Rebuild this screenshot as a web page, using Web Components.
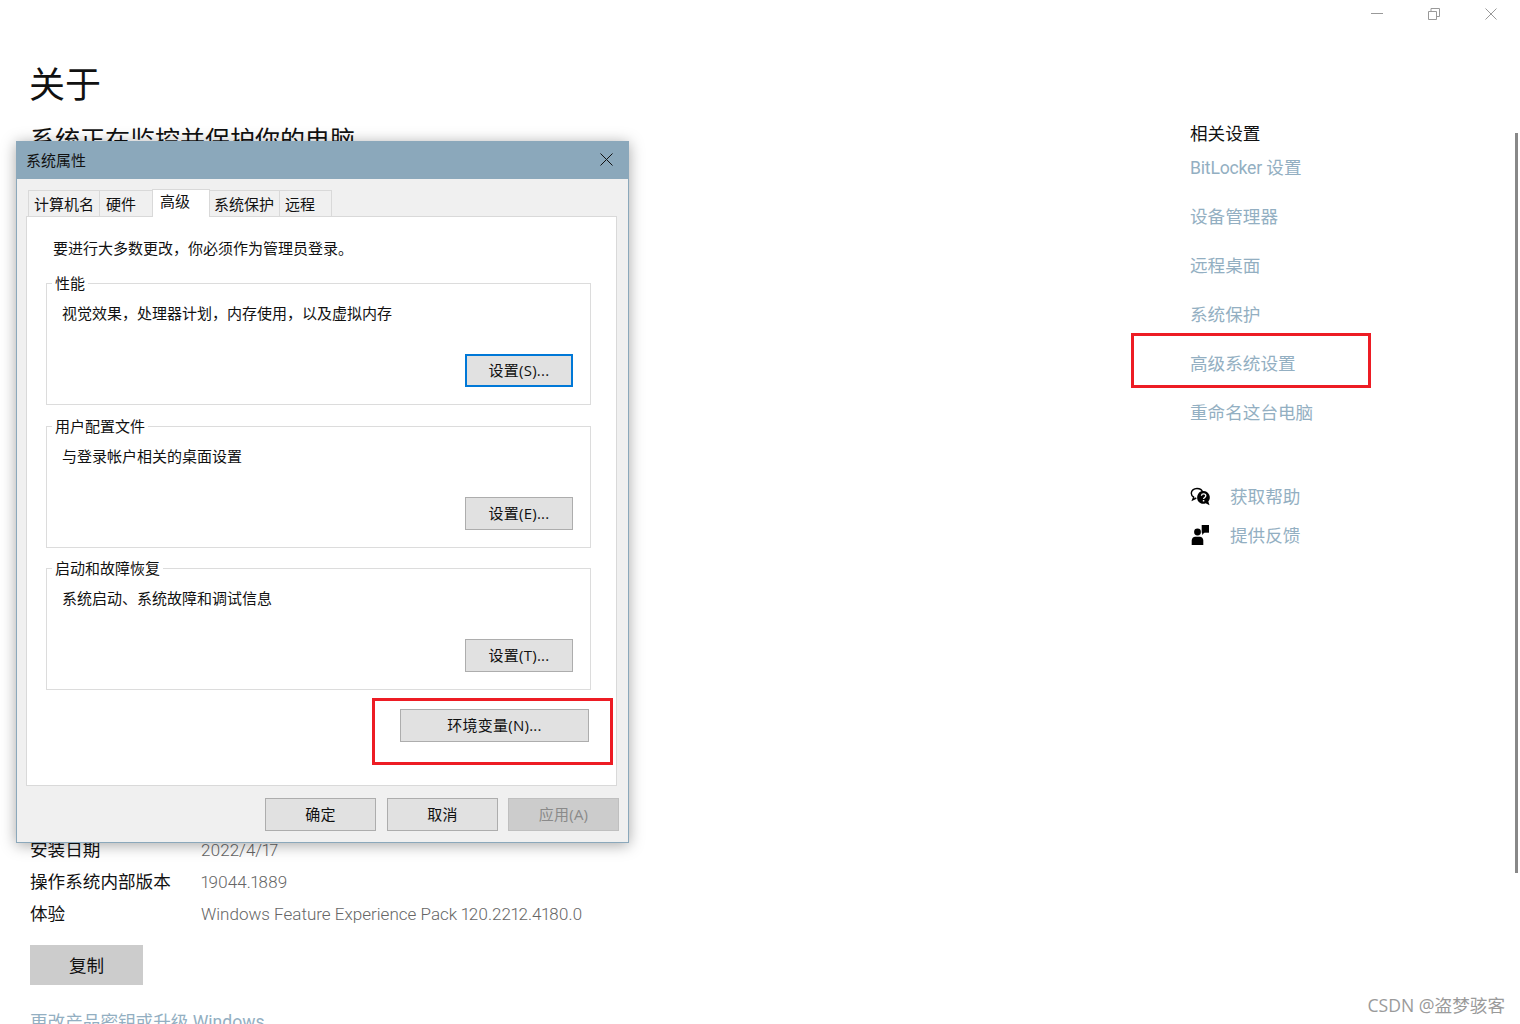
<!DOCTYPE html>
<html lang="zh-CN">
<head>
<meta charset="utf-8">
<title>关于</title>
<style>
  html, body { margin: 0; height: 100%; overflow: hidden; background: #fff; }
  body { font-family: "Open Sans", "Noto Sans CJK SC", sans-serif; position: relative; width: 1520px; height: 1024px; }
</style>
</head>
<body>
<about-page></about-page>
<sys-dialog></sys-dialog>
<red-box style="left:1131px;top:333px;width:240px;height:55px"></red-box>
<red-box style="left:372px;top:698px;width:241px;height:67px"></red-box>

<script>
const FONT = '"Open Sans", "Noto Sans CJK SC", sans-serif';
const THIN = 'Roboto, "Noto Sans CJK SC", sans-serif';

class WinControls extends HTMLElement {
  constructor() {
    super();
    this.attachShadow({ mode: 'open' }).innerHTML = `
      <style>
        :host { position: absolute; top: 0; right: 0; width: 1520px; height: 28px; display: flex; justify-content: flex-end; box-sizing: border-box; padding: 8px 23px 0 0; gap: 45px; }
        svg { width: 12px; height: 12px; display: block; fill: none; stroke: #999; stroke-width: 1; }
      </style>
      <svg viewBox="0 0 12 12"><path d="M0 5.5h12"/></svg>
      <svg viewBox="0 0 12 12"><path d="M.5 3.5h8v8h-8zM3 3.5V.5h8.5v8H8.500"/></svg>
      <svg viewBox="0 0 12 12"><path d="M.5.5l11 11M11.500.5l-11 11"/></svg>`;
  }
}
customElements.define('win-controls', WinControls);

class InfoRow extends HTMLElement {
  constructor() {
    super();
    this.attachShadow({ mode: 'open' }).innerHTML = `
      <style>
        :host { display: grid; grid-template-columns: 171px 1fr; height: 32px; line-height: 32px; font-size: 17.6px; color: #111; }
        .v { color: #666; font-family: ${THIN}; font-weight: 300; font-size: 17.05px; line-height: 34px; font-variant-numeric: proportional-nums; }
      </style>
      <div><slot name="k"></slot></div>
      <div class="v"><slot name="v"></slot></div>`;
  }
}
customElements.define('info-row', InfoRow);

class RelatedPanel extends HTMLElement {
  constructor() {
    super();
    this.attachShadow({ mode: 'open' }).innerHTML = `
      <style>
        :host { display: block; padding-top: 119px; font-size: 17.6px; line-height: 28px; }
        h2 { font: inherit; color: #111; margin: 0; }
        a { display: block; color: #93afc2; font-family: ${THIN}; height: 49px; text-decoration: none; }
        .links { margin-top: 7px; }
        .latin { letter-spacing: -.2px; }
        .help { margin-top: 29px; display: grid; grid-template-columns: 40px 1fr; grid-auto-rows: 39px; align-items: center; }
        .help a { height: auto; }
        svg { width: 22px; height: 22px; display: block; }
      </style>
      <h2>相关设置</h2>
      <div class="links">
        <a><span class="latin">BitLocker</span> 设置</a>
        <a>设备管理器</a>
        <a>远程桌面</a>
        <a>系统保护</a>
        <a>高级系统设置</a>
        <a>重命名这台电脑</a>
      </div>
      <div class="help">
        <svg viewBox="0 0 22 22">
          <path d="M7 2.500c-3.300 0-5.700 2-5.700 4.700 0 1.700 1 3.100 2.400 4l-1 2.600 3.600-1.800" fill="#fff" stroke="#000" stroke-width="1.400"/>
          <path d="M7 2.500c2.800 0 5 1.500 5.500 3.500" fill="none" stroke="#000" stroke-width="1.400"/>
          <path d="M13.500 5a6.500 6.500 0 0 0-2.800 12.300c1.700.8 3.500.7 5-.1l3.800 2-1.200-3.600A6.500 6.500 0 0 0 13.500 5z" fill="#000"/>
          <path d="M11.400 9.800c.1-1.200 1-1.900 2.200-1.900 1.300 0 2.200.8 2.200 1.900 0 1.700-2.200 1.600-2.200 3.200" fill="none" stroke="#fff" stroke-width="1.300"/>
          <rect x="12.800" y="14" width="1.500" height="1.500" fill="#fff"/>
        </svg>
        <a>获取帮助</a>
        <svg viewBox="0 0 22 22">
          <rect x="11.700" y="0" width="7.300" height="7.700" fill="#000"/>
          <path d="M12 7l.3 3 2.400-3z" fill="#000"/>
          <circle cx="7.500" cy="7" r="3.400" fill="#000"/>
          <path d="M1.700 20v-4.500c0-2.300 1.700-3.800 3.500-3.800h4.600c1.800 0 3.500 1.500 3.500 3.800V20z" fill="#000"/>
        </svg>
        <a>提供反馈</a>
      </div>`;
  }
}
customElements.define('related-panel', RelatedPanel);

class AboutPage extends HTMLElement {
  constructor() {
    super();
    this.attachShadow({ mode: 'open' }).innerHTML = `
      <style>
        :host { display: grid; grid-template-columns: 1190px 1fr; height: 1024px; overflow: hidden; position: relative; font-family: ${FONT}; }
        .main { padding: 60px 0 0 30px; }
        h1 { font-size: 36px; font-weight: 400; line-height: 50px; margin: 0 0 0 -1px; color: #111; }
        h3 { font-size: 25px; font-weight: 400; line-height: 36px; margin: 11px 0 0; color: #111; }
        .rows { margin-top: 676px; }
        button { display: block; margin-top: 16px; width: 113px; height: 40px; border: 0; background: #ccc; color: #111; font: inherit; font-size: 17.6px; padding: 0 0 2px; }
        a { display: block; margin-top: 23px; color: #93afc2; font-family: ${THIN}; font-size: 17.6px; line-height: 28px; white-space: nowrap; }
        .bar { position: absolute; left: 1515px; top: 133px; width: 3px; height: 740px; background: #888; }
        .mark { position: absolute; right: 15px; top: 993px; color: #9a9a9a; font-size: 17.6px; line-height: 24px; }
      </style>
      <div class="main">
        <h1>关于</h1>
        <h3>系统正在监控并保护你的电脑</h3>
        <div class="rows">
          <info-row><span slot="k">安装日期</span><span slot="v">2022/4/17</span></info-row>
          <info-row><span slot="k">操作系统内部版本</span><span slot="v">19044.1889</span></info-row>
          <info-row><span slot="k">体验</span><span slot="v">Windows Feature Experience Pack 120.2212.4180.0</span></info-row>
        </div>
        <button>复制</button>
        <a>更改产品密钥或升级 Windows</a>
      </div>
      <related-panel></related-panel>
      <win-controls></win-controls>
      <div class="bar"></div>
      <div class="mark">CSDN @盗梦骇客</div>`;
  }
}
customElements.define('about-page', AboutPage);

class WinButton extends HTMLElement {
  constructor() {
    super();
    this.attachShadow({ mode: 'open' }).innerHTML = `
      <style>
        :host { display: flex; align-items: center; justify-content: center; box-sizing: border-box; width: 108px; height: 33px; padding-bottom: 2px; border: 1px solid #adadad; background: #e1e1e1; color: #111; font-size: 15px; letter-spacing: .25px; }
        :host([kind="focus"]) { border: 2px solid #0078d7; }
        :host([kind="off"]) { background: #ccc; border-color: #bfbfbf; color: #8a8a8a; }
      </style>
      <slot></slot>`;
  }
}
customElements.define('win-button', WinButton);

class GroupBox extends HTMLElement {
  constructor() {
    super();
    this.attachShadow({ mode: 'open' }).innerHTML = `
      <style>
        :host { display: flex; flex-direction: column; box-sizing: border-box; width: 545px; height: 122px; border: 1px solid #dcdcdc; padding: 0 17px 17px 15px; }
        .legend { align-self: flex-start; margin: -11px 0 0 -10px; padding: 0 3px; background: #fff; line-height: 20px; }
        .text { margin-top: 10px; line-height: 20px; flex: 1; }
        .act { display: flex; justify-content: flex-end; }
      </style>
      <div class="legend"></div>
      <div class="text"><slot></slot></div>
      <div class="act"><slot name="action"></slot></div>`;
    this.shadowRoot.querySelector('.legend').textContent = this.getAttribute('label');
  }
}
customElements.define('group-box', GroupBox);

class TabStrip extends HTMLElement {
  constructor() {
    super();
    this.attachShadow({ mode: 'open' }).innerHTML = `
      <style>
        :host { display: flex; align-items: flex-end; height: 27px; margin-left: 11px; position: relative; z-index: 1; font-size: 15px; }
        div { box-sizing: border-box; height: 26px; line-height: 26px; border: 1px solid #d9d9d9; border-bottom: 0; margin-right: -1px; padding-left: 5px; background: #f0f0f0; }
        .on { height: 28px; line-height: 22px; background: #fff; padding-left: 7px; position: relative; margin-bottom: -1px; }
      </style>
      <div style="width:72px">计算机名</div>
      <div style="width:54px;padding-left:6px">硬件</div>
      <div class="on" style="width:58px">高级</div>
      <div style="width:71px;padding-left:4px">系统保护</div>
      <div style="width:53px;padding-left:5px">远程</div>`;
  }
}
customElements.define('tab-strip', TabStrip);

class SysDialog extends HTMLElement {
  constructor() {
    super();
    this.attachShadow({ mode: 'open' }).innerHTML = `
      <style>
        :host { position: absolute; left: 16px; top: 141px; width: 613px; height: 702px; box-sizing: border-box; border: 1px solid #8ba8bb; background: #f0f0f0; box-shadow: 0 2px 14px rgba(0,0,0,.35); font-family: ${FONT}; font-size: 15px; color: #111; display: flex; flex-direction: column; }
        .title { flex: none; box-sizing: border-box; height: 37px; background: #8ba8bb; display: flex; align-items: center; justify-content: space-between; padding: 0 15px 2px 9px; }
        .title svg { width: 13px; height: 13px; fill: none; stroke: #111; stroke-width: 1; display: block; }
        tab-strip { margin-top: 10px; }
        .panel { box-sizing: border-box; width: 591px; height: 570px; margin-left: 9px; background: #fff; border: 1px solid #d9d9d9; padding: 21px 0 0 19px; }
        .lead { line-height: 20px; margin: 0 0 25px 7px; }
        group-box + group-box { margin-top: 21px; }
        group-box:last-of-type { margin-top: 20px; }
        .env { display: flex; justify-content: flex-end; margin: 19px 27px 0 0; }
        .env win-button { width: 189px; }
        .foot { display: flex; justify-content: flex-end; gap: 10px; margin: 12px 9px 0 0; }
        .foot win-button { width: 111px; }
        .foot win-button:first-child { margin-right: 1px; }
      </style>
      <div class="title">
        <span>系统属性</span>
        <svg viewBox="0 0 13 13"><path d="M.5.5l12 12M12.500.5l-12 12"/></svg>
      </div>
      <tab-strip></tab-strip>
      <div class="panel">
        <div class="lead">要进行大多数更改，你必须作为管理员登录。</div>
        <group-box label="性能">视觉效果，处理器计划，内存使用，以及虚拟内存<win-button slot="action" kind="focus">设置(S)...</win-button></group-box>
        <group-box label="用户配置文件">与登录帐户相关的桌面设置<win-button slot="action">设置(E)...</win-button></group-box>
        <group-box label="启动和故障恢复">系统启动、系统故障和调试信息<win-button slot="action">设置(T)...</win-button></group-box>
        <div class="env"><win-button>环境变量(N)...</win-button></div>
      </div>
      <div class="foot">
        <win-button>确定</win-button>
        <win-button>取消</win-button>
        <win-button kind="off">应用(A)</win-button>
      </div>`;
  }
}
customElements.define('sys-dialog', SysDialog);

class RedBox extends HTMLElement {
  constructor() {
    super();
    this.attachShadow({ mode: 'open' }).innerHTML = `
      <style>
        :host { position: absolute; box-sizing: border-box; border: 3px solid #ed1c24; pointer-events: none; }
      </style>`;
  }
}
customElements.define('red-box', RedBox);
</script>
</body>
</html>
